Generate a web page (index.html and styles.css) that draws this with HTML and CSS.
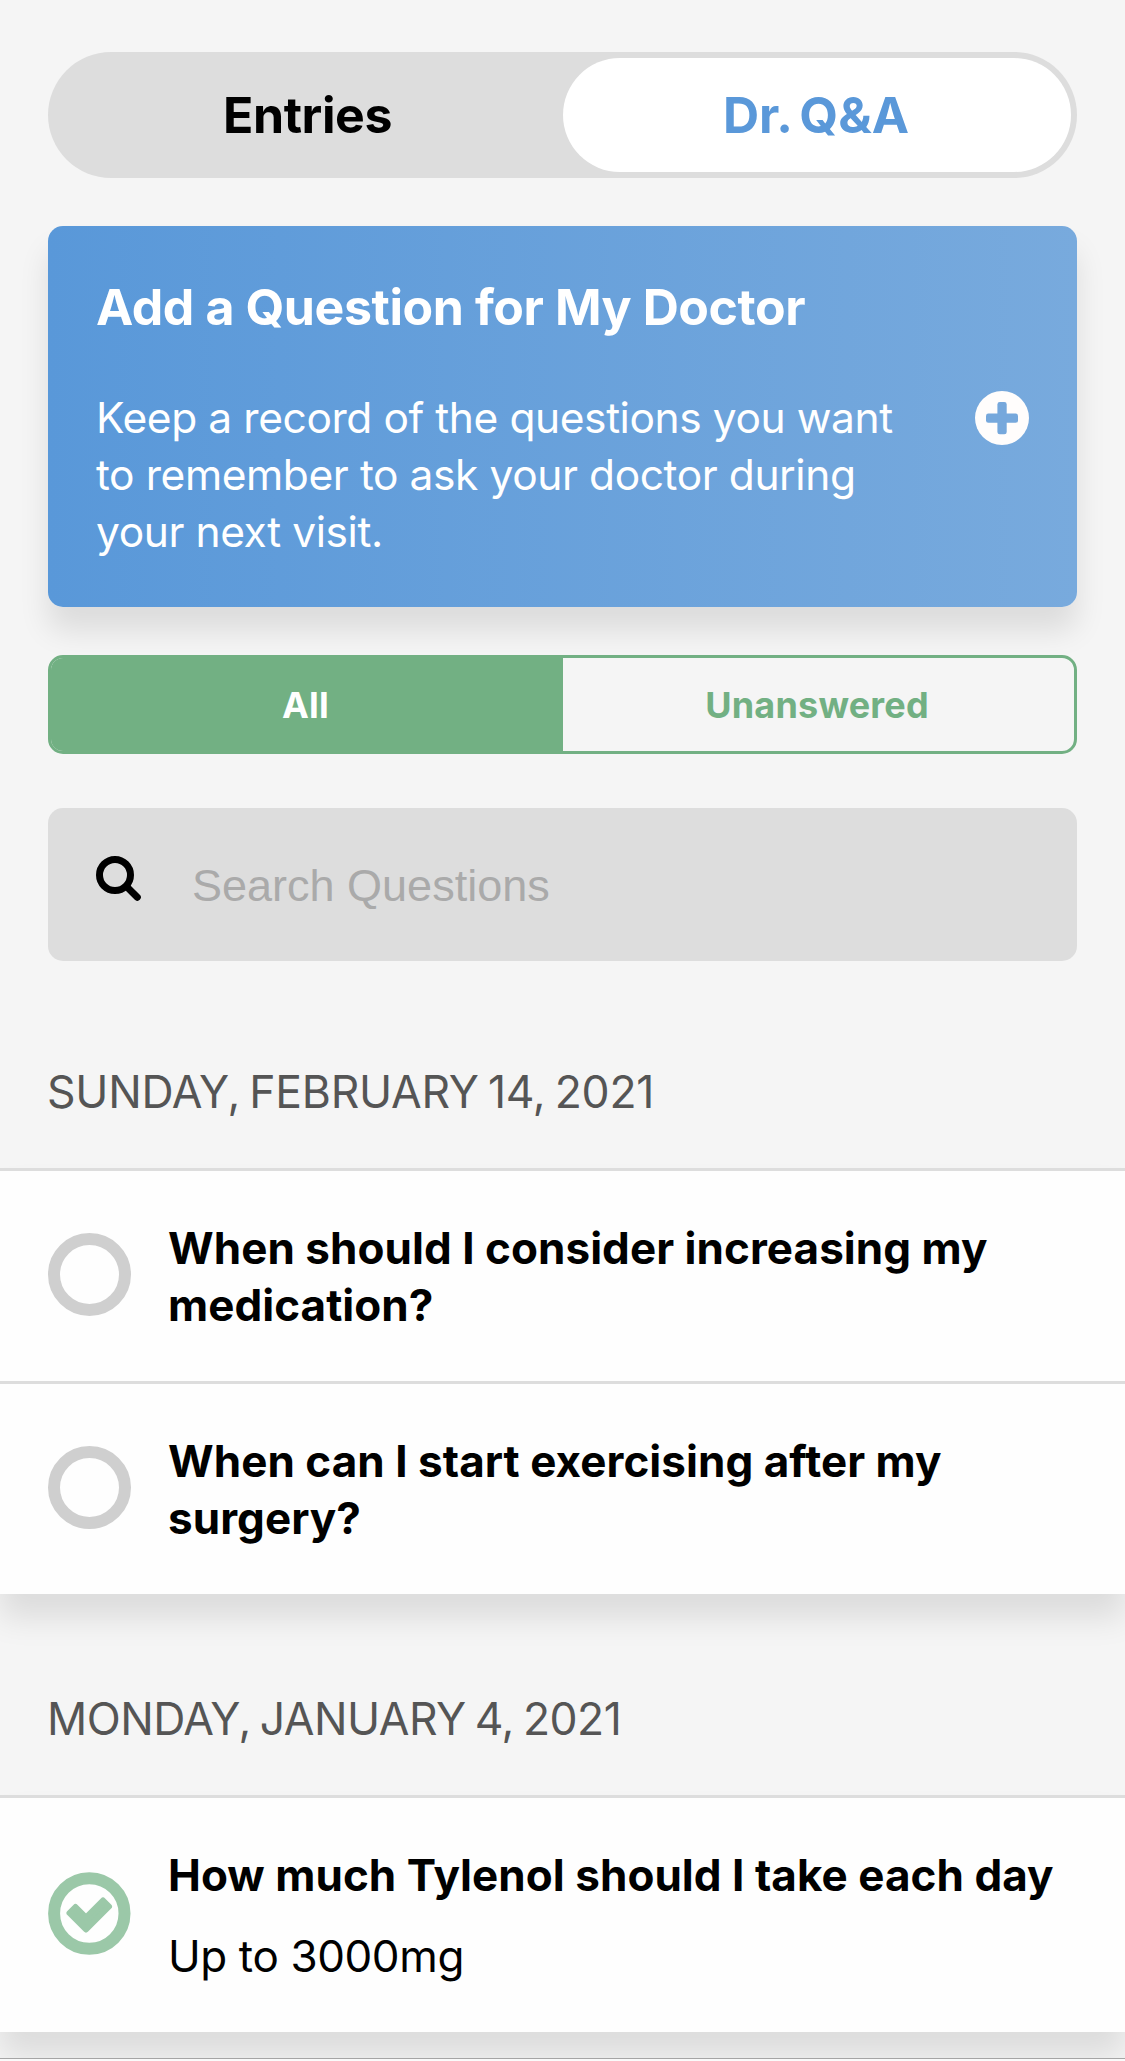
FILE: index.html
```html
<!DOCTYPE html>
<html lang="en">
<head>
<meta charset="utf-8">
<title>Dr. Q&amp;A</title>
<link rel="stylesheet" href="styles.css">
</head>
<body>
<main class="page">
  <nav class="tabs">
    <a class="tab tab-entries">Entries</a>
    <a class="tab tab-active">Dr. Q&amp;A</a>
  </nav>

  <section class="add-card">
    <div class="add-text">
      <h1 class="add-title">Add a Question for My Doctor</h1>
      <p class="add-body">Keep a record of the questions you want<br>to remember to ask your doctor during<br>your next visit.</p>
    </div>
    <svg class="add-icon" viewBox="0 0 54 54">
      <circle cx="27" cy="27" r="27" fill="#fffdfc"/>
      <rect x="11" y="22.5" width="32" height="9.3" rx="2.4" fill="#76a8dc"/>
      <rect x="22.4" y="11" width="9.3" height="32.3" rx="2.4" fill="#76a8dc"/>
    </svg>
  </section>

  <div class="filter">
    <a class="filter-option filter-active">All</a>
    <a class="filter-option">Unanswered</a>
  </div>

  <div class="search">
    <svg class="search-icon" viewBox="0 0 45 45" fill="none" stroke="#000" stroke-width="7" stroke-linecap="round">
      <circle cx="19" cy="19" r="15.5"/>
      <path d="M30.5 30.5L41.3 41.3"/>
    </svg>
    <span class="search-placeholder">Search Questions</span>
  </div>

  <h2 class="date date-first">SUNDAY, FEBRUARY 14, 2021</h2>
  <section class="list">
    <article class="row">
      <span class="mark"></span>
      <h3 class="question">When should I consider increasing my<br>medication?</h3>
    </article>
    <article class="row">
      <span class="mark"></span>
      <h3 class="question">When can I start exercising after my<br>surgery?</h3>
    </article>
  </section>

  <h2 class="date date-second">MONDAY, JANUARY 4, 2021</h2>
  <section class="list">
    <article class="row">
      <svg class="check" viewBox="0 0 83 83">
        <circle cx="41.3" cy="41.5" r="35.2" fill="none" stroke="#9bc8a8" stroke-width="12"/>
        <path d="M21.5 41L27.5 35L38 45.5L55 28.5L61 34.5L38 57.5Z" fill="#9bc8a8" stroke="#9bc8a8" stroke-width="6" stroke-linejoin="round"/>
      </svg>
      <div class="qa">
        <h3 class="question">How much Tylenol should I take each day</h3>
        <p class="answer">Up to 3000mg</p>
      </div>
    </article>
  </section>
  <footer class="bottom-bar"></footer>
</main>
</body>
</html>
```
FILE: styles.css
```css
* {
  box-sizing: border-box;
}

body {
  margin: 0;
  background: #f5f5f5;
  color: #000;
  font-family: Inter, sans-serif;
}

h1, h2, h3, p {
  margin: 0;
}

.page {
  display: flex;
  flex-direction: column;
  height: 2061px;
  padding-top: 52px;
  overflow: hidden;
}

.tabs {
  display: flex;
  height: 126px;
  margin: 0 48px;
  padding: 6px 6px 6px 0;
  border-radius: 63px;
  background: #ddd;
}

.tab {
  display: flex;
  align-items: center;
  justify-content: center;
  font-size: 50px;
  font-weight: 700;
}

.tab-entries {
  flex: 0 0 515px;
  padding-left: 4px;
  letter-spacing: -0.4px;
}

.tab-active {
  flex: 1;
  padding-right: 2px;
  border-radius: 57px;
  background: #fff;
  color: #5a98d9;
  word-spacing: -4px;
}

.add-card {
  display: flex;
  align-items: center;
  justify-content: space-between;
  height: 381px;
  margin: 48px 48px 0;
  padding: 51px 48px 48px;
  border-radius: 15px;
  background: linear-gradient(90deg, #5998d9, #78aadd);
  box-shadow: 0 24px 30px rgba(0, 0, 0, 0.1);
  color: #fff;
}

.add-title {
  margin-bottom: 52px;
  font-size: 50px;
  font-weight: 700;
  line-height: 60px;
  letter-spacing: -0.42px;
}

.add-body {
  font-size: 42.5px;
  line-height: 57px;
  letter-spacing: -0.42px;
}

.add-icon {
  width: 54px;
  height: 54px;
}

.filter {
  display: flex;
  height: 99px;
  margin: 48px 48px 0;
  border: 3px solid #72b083;
  border-radius: 15px;
  background: #f5f5f5;
  overflow: hidden;
  position: relative;
}

.filter-option {
  display: flex;
  flex: 1;
  align-items: center;
  justify-content: center;
  padding-right: 3px;
  color: #72b083;
  font-size: 36px;
  font-weight: 700;
  letter-spacing: 0.2px;
}

.filter-active {
  flex: 0 0 512px;
  background: #72b083;
  color: #fff;
}

.search {
  display: flex;
  align-items: center;
  gap: 51px;
  height: 153px;
  margin: 54px 48px 0;
  padding: 0 48px;
  border-radius: 15px;
  background: #ddd;
}

.search-icon {
  width: 45px;
  height: 45px;
  margin-bottom: 12px;
}

.search-placeholder {
  padding-top: 2px;
  color: #aaa;
  font: 45px "Liberation Sans", Arial, sans-serif;
}

.date {
  padding: 0 47px 49px;
  color: #555;
  font-size: 44.5px;
  font-weight: 400;
  line-height: 54px;
  word-spacing: -3px;
}

.date-first {
  margin-top: 104px;
  letter-spacing: -0.25px;
}

.date-second {
  margin-top: 98px;
  letter-spacing: -0.5px;
}

.list {
  box-shadow: 0 24px 30px rgba(0, 0, 0, 0.1);
}

.row {
  display: flex;
  align-items: center;
  padding: 49px 48px 47px;
  border-top: 3px solid #ddd;
  background: #fefefe;
}

.mark,
.check {
  flex: none;
  width: 83px;
  height: 83px;
  margin: 0 37px 5px 0;
}

.mark {
  border: 12px solid #cfcfcf;
  border-radius: 50%;
}

.question {
  font-size: 44px;
  font-weight: 700;
  line-height: 57px;
  letter-spacing: 0.05px;
}

.answer {
  margin-top: 24px;
  font-size: 44px;
  line-height: 57px;
  letter-spacing: -0.4px;
}

.bottom-bar {
  position: relative;
  height: 3px;
  margin-top: 26px;
  border-top: 1px solid #a5a5a5;
  background: #fafafa;
}
```
